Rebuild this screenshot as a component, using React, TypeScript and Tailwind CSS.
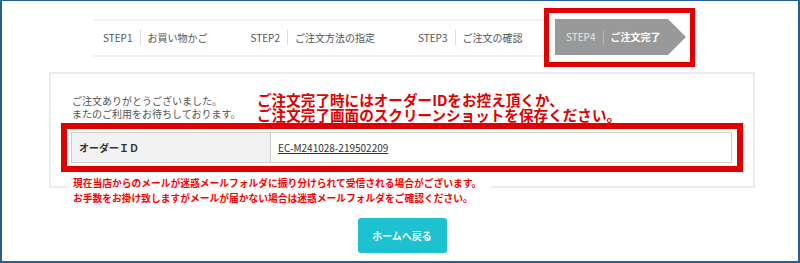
import React from "react";

const font = { fontFamily: '"Noto Sans CJK JP", "Noto Sans", sans-serif' };

function Step({ n, label }: { n: string; label: string }) {
  return (
    <div className="flex items-center">
      <span className="text-[10px] text-[#555] leading-none">{n}</span>
      <span className="mx-[7px] h-[15px] w-px bg-[#dddddd]" />
      <span className="text-[10px] text-[#555] leading-none">{label}</span>
    </div>
  );
}

export default function App() {
  return (
    <div
      style={font}
      className="box-border h-[263px] w-[800px] overflow-hidden border-t border-r-2 border-b-2 border-l-2 border-[#23609a] bg-white"
    >
      {/* step bar */}
      <div className="mt-[7px] ml-[91px] flex items-center">
        <div className="box-border flex h-[38px] w-[451px] items-center gap-[43px] border-y-2 border-[#f2f2f2] pl-[10px]">
          <Step n="STEP1" label="お買い物かご" />
          <Step n="STEP2" label="ご注文方法の指定" />
          <Step n="STEP3" label="ご注文の確認" />
        </div>
        <div className="box-border border-[5px] border-[#e00000] pt-[6px] pr-[4px] pb-[7px] pl-[6px]">
          <div className="flex h-[36px] w-[131px] items-center bg-[#999999] pl-[11px] [clip-path:polygon(0_0,calc(100%-18px)_0,100%_50%,calc(100%-18px)_100%,0_100%)]">
            <span className="text-[10px] leading-none text-[#e6e6e6]">STEP4</span>
            <span className="mx-[7px] h-[15px] w-px bg-[#b5b5b5]" />
            <span className="text-[10px] font-bold leading-none text-white">ご注文完了</span>
          </div>
        </div>
      </div>

      {/* content column */}
      <div className="mt-[5px] ml-[47px] flex w-[706px] flex-col">
        <div className="box-border border-2 border-[#ececec] px-[10px] pt-[18px] pb-[14px]">
          <div className="flex items-center gap-[6px] pl-[11px]">
            <div className="w-[179px] shrink-0 text-[10px] leading-[13px] text-[#555]">
              <p>ご注文ありがとうございました。</p>
              <p>またのご利用をお待ちしております。</p>
            </div>
            <div className="text-[14.6px] font-bold leading-[15px] text-[#e00000]">
              <p>ご注文完了時にはオーダーIDをお控え頂くか、</p>
              <p>ご注文完了画面のスクリーンショットを保存ください。</p>
            </div>
          </div>
          <div className="mt-[1px] box-border border-[6px] border-[#e00000] pt-[3px] pr-[5px] pb-[3px] pl-[4px]">
            <div className="box-border flex h-[31px] border border-[#cccccc]">
              <div className="flex w-[199px] items-center border-r border-[#cccccc] bg-[#f2f2f2] pl-[7px] text-[10px] font-bold text-[#333]">
                オーダーＩＤ
              </div>
              <div className="flex flex-1 items-center pl-[7px] text-[10px] text-[#333]">
                <span className="underline">EC-M241028-219502209</span>
              </div>
            </div>
          </div>
        </div>

        <div className="relative z-10 -mt-[12px] ml-[19px] w-fit bg-white pr-[10px] pl-[5px] text-[9.75px] font-bold leading-[15px] text-[#ff0000]">
          <p>現在当店からのメールが迷惑メールフォルダに振り分けられて受信される場合がございます。</p>
          <p>お手数をお掛け致しますがメールが届かない場合は迷惑メールフォルダをご確認ください。</p>
        </div>

        <button className="mx-auto mt-[12px] flex h-[35px] w-[89px] items-center justify-center rounded-[3px] bg-[#1dc1d0] text-[10px] font-bold text-white">
          ホームへ戻る
        </button>
      </div>
    </div>
  );
}
